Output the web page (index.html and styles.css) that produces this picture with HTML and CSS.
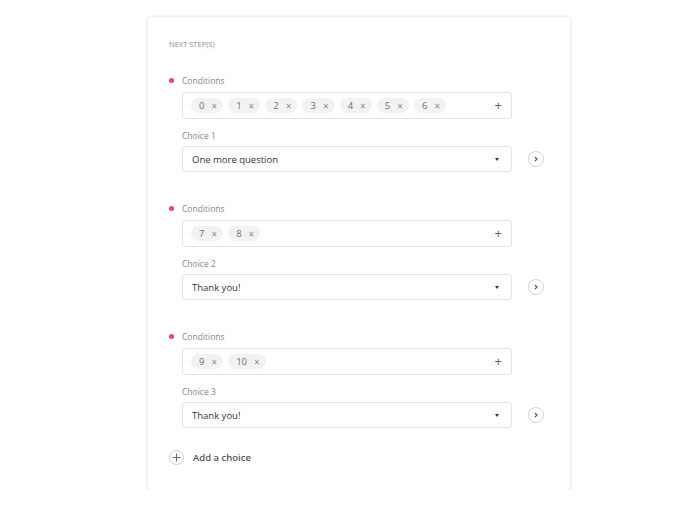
FILE: index.html
```html
<!DOCTYPE html>
<html lang="en">
<head>
  <meta charset="UTF-8" />
  <title>Next steps</title>
  <meta name="viewport" content="width=device-width, initial-scale=1" />
  <link rel="stylesheet" href="styles.css">
</head>
<body>
  <div class="card">
    <div class="title">Next step(s)</div>

    <div class="block">
      <div class="cond-head"><span class="dot"></span><span class="label">Conditions</span></div>
      <div class="rule">
        <div class="box tagbox">
          <span class="chip">0<span class="x">×</span></span>
          <span class="chip">1<span class="x">×</span></span>
          <span class="chip">2<span class="x">×</span></span>
          <span class="chip">3<span class="x">×</span></span>
          <span class="chip">4<span class="x">×</span></span>
          <span class="chip">5<span class="x">×</span></span>
          <span class="chip">6<span class="x">×</span></span>
          <span class="plus">+</span>
        </div>
        <div class="label choice-label">Choice 1</div>
        <div class="choice-row">
          <div class="box select">One more question<span class="caret"></span></div>
          <button class="go"><svg width="8" height="8" viewBox="0 0 8 8"><path d="M3 2 L5 4 L3 6" fill="none" stroke="#555" stroke-width="1.1"/></svg></button>
        </div>
      </div>
    </div>

    <div class="block">
      <div class="cond-head"><span class="dot"></span><span class="label">Conditions</span></div>
      <div class="rule">
        <div class="box tagbox">
          <span class="chip">7<span class="x">×</span></span>
          <span class="chip">8<span class="x">×</span></span>
          <span class="plus">+</span>
        </div>
        <div class="label choice-label">Choice 2</div>
        <div class="choice-row">
          <div class="box select">Thank you!<span class="caret"></span></div>
          <button class="go"><svg width="8" height="8" viewBox="0 0 8 8"><path d="M3 2 L5 4 L3 6" fill="none" stroke="#555" stroke-width="1.1"/></svg></button>
        </div>
      </div>
    </div>

    <div class="block">
      <div class="cond-head"><span class="dot"></span><span class="label">Conditions</span></div>
      <div class="rule">
        <div class="box tagbox">
          <span class="chip">9<span class="x">×</span></span>
          <span class="chip">10<span class="x">×</span></span>
          <span class="plus">+</span>
        </div>
        <div class="label choice-label">Choice 3</div>
        <div class="choice-row">
          <div class="box select">Thank you!<span class="caret"></span></div>
          <button class="go"><svg width="8" height="8" viewBox="0 0 8 8"><path d="M3 2 L5 4 L3 6" fill="none" stroke="#555" stroke-width="1.1"/></svg></button>
        </div>
      </div>
    </div>

    <div class="add">
      <span class="add-icon"><svg width="9" height="9" viewBox="0 0 9 9"><path d="M4.5 0.5 V8.5 M0.5 4.5 H8.5" stroke="#666" stroke-width="1"/></svg></span>
      <span>Add a choice</span>
    </div>
  </div>
</body>
</html>
```

FILE: styles.css
```css
body {
  margin: 0;
  font-family: 'Open Sans', 'Noto Sans', sans-serif;
  background: #fff;
  color: #333;
}
.card {
  width: 422px;
  box-sizing: border-box;
  margin: 17px 0 0 148px;
  padding: 21px 21px 24px 21px;
  background: #fff;
  border-radius: 3px;
  box-shadow: 0 0 4px rgba(0, 0, 0, 0.14), 0 1px 2px rgba(0, 0, 0, 0.08);
}
.title {
  font-size: 7.5px;
  line-height: 12px;
  text-transform: uppercase;
  color: #8f8f8f;
}
.block {
  margin-top: 25px;
}
.block + .block {
  margin-top: 31px;
}
.cond-head {
  display: flex;
  align-items: center;
  height: 12px;
}
.dot {
  width: 5px;
  height: 5px;
  border-radius: 50%;
  background: #f4466f;
  margin: 0 8px 0 0;
  position: relative;
  top: -1px;
}
.label {
  font-size: 8.5px;
  line-height: 12px;
  color: #888;
}
.rule {
  margin-left: 13px;
  width: 330px;
}
.box {
  box-sizing: border-box;
  border: 1px solid #e3e3e3;
  border-radius: 3px;
  background: #fff;
}
.tagbox {
  margin-top: 5px;
  height: 27px;
  display: flex;
  align-items: center;
  gap: 5px;
  padding: 0 9px 0 8px;
}
.chip {
  display: inline-flex;
  align-items: center;
  height: 15px;
  padding: 0 6px 0 8px;
  border-radius: 8px;
  background: #f2f2f2;
  font-size: 9.5px;
  color: #6f6f6f;
  gap: 7px;
}
.chip .x {
  font-size: 10px;
  color: #8a8a8a;
}
.plus {
  margin-left: auto;
  font-size: 13px;
  line-height: 13px;
  color: #666;
}
.choice-label {
  margin-top: 11px;
}
.choice-row {
  display: flex;
  align-items: center;
  margin-top: 4px;
}
.select {
  flex: 0 0 330px;
  height: 26px;
  display: flex;
  align-items: center;
  padding: 0 10px 0 9px;
  font-size: 9.5px;
  color: #333;
}
.caret {
  margin-left: auto;
  width: 0;
  height: 0;
  border-left: 2.5px solid transparent;
  border-right: 2.5px solid transparent;
  border-top: 3px solid #333;
  margin-right: 2px;
}
.go {
  flex: 0 0 16px;
  width: 16px;
  height: 16px;
  margin-left: 16px;
  padding: 0;
  border: 1px solid #d6d6d6;
  border-radius: 50%;
  background: #fff;
  display: flex;
  align-items: center;
  justify-content: center;
  cursor: pointer;
}
.go svg {
  display: block;
}
.add {
  display: flex;
  align-items: center;
  margin-top: 22px;
  font-size: 9.5px;
  font-weight: 600;
  color: #555;
  gap: 9px;
}
.add-icon {
  width: 15px;
  height: 15px;
  box-sizing: border-box;
  border: 1px solid #cfcfcf;
  border-radius: 50%;
  display: flex;
  align-items: center;
  justify-content: center;
}
.add-icon svg {
  display: block;
}
```
